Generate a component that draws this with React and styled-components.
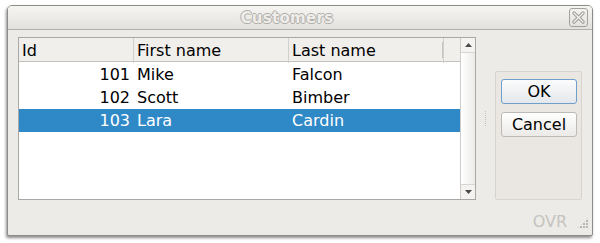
import React from "react";
import styled, { createGlobalStyle } from "styled-components";

const Global = createGlobalStyle`
  html, body {
    margin: 0;
    padding: 0;
    background: #ffffff;
  }
  body {
    font-family: "DejaVu Sans", "Liberation Sans", sans-serif;
  }
`;

const Stage = styled.div`
  width: 600px;
  height: 243px;
  padding: 5px 0 0 7px;
  box-sizing: border-box;
`;

const Window = styled.div`
  width: 586px;
  height: 231px;
  box-sizing: border-box;
  border: 1px solid #8e8c88;
  border-radius: 5px 5px 2px 2px;
  background: #edebe7;
  box-shadow: -1px 2px 3px rgba(0, 0, 0, 0.45);
  display: flex;
  flex-direction: column;
  overflow: hidden;
`;

const TitleBar = styled.div`
  height: 23px;
  flex: none;
  display: flex;
  align-items: center;
  justify-content: center;
  position: relative;
  padding-right: 26px;
  background: linear-gradient(#f6f5f3, #e3e1dd);
  border-bottom: 1px solid #b3b1ac;
`;

const Title = styled.span`
  font-size: 15px;
  font-weight: bold;
  color: #efedea;
  letter-spacing: 0.3px;
  text-shadow: 1px 0 0 #b0aeaa, -1px 0 0 #b0aeaa, 0 1px 0 #b0aeaa, 0 -1px 0 #b0aeaa;
`;

const CloseBtn = styled.div`
  position: absolute;
  right: 4px;
  top: 2px;
  width: 17px;
  height: 17px;
  border: 1px solid #a3a19d;
  border-radius: 3px;
  display: flex;
  align-items: center;
  justify-content: center;
  background: linear-gradient(#f4f3f1, #e4e2de);
`;

const Body = styled.div`
  flex: 1;
  display: flex;
  padding: 7px 10px 0 10px;
`;

const Table = styled.div`
  width: 458px;
  height: 163px;
  box-sizing: border-box;
  border: 1px solid #aaa8a4;
  background: #ffffff;
  display: flex;
`;

const Grid = styled.div`
  flex: 1;
  display: flex;
  flex-direction: column;
`;

const HeaderRow = styled.div`
  display: grid;
  grid-template-columns: 115px 155px 155px 1fr;
  height: 23px;
  flex: none;
  background: #f1efec;
  border-bottom: 1px solid #c4c2be;
  margin-bottom: 1px;
`;

const HeaderCell = styled.div`
  font-size: 16px;
  color: #000;
  line-height: 25px;
  padding-left: 3px;
  border-right: ${(p) => (p.$last ? "none" : "1px solid #d2d0cc")};
  position: relative;
  &::after {
    content: "";
    display: ${(p) => (p.$mark ? "block" : "none")};
    position: absolute;
    right: 0;
    top: 4px;
    width: 1px;
    height: 16px;
    background: #c6c4c0;
  }
`;

const Row = styled.div`
  display: grid;
  grid-template-columns: 115px 155px 155px 1fr;
  height: 23px;
  flex: none;
  background: ${(p) => (p.$selected ? "#2f89c7" : "transparent")};
  color: ${(p) => (p.$selected ? "#ffffff" : "#000000")};
  font-size: 16px;
  line-height: 24px;
`;

const Cell = styled.div`
  padding: 0 ${(p) => (p.$right ? "4px" : "0")} 0 ${(p) => (p.$right ? "0" : "3px")};
  text-align: ${(p) => (p.$right ? "right" : "left")};
  white-space: nowrap;
`;

const ScrollBar = styled.div`
  width: 14px;
  flex: none;
  border-left: 1px solid #cfcdc9;
  background: linear-gradient(90deg, #ffffff, #ecebe8);
  display: flex;
  flex-direction: column;
  justify-content: space-between;
`;

const Arrow = styled.div`
  height: 14px;
  display: flex;
  align-items: center;
  justify-content: center;
  border-bottom: ${(p) => (p.$down ? "none" : "1px solid #d8d6d2")};
  border-top: ${(p) => (p.$down ? "1px solid #d8d6d2" : "none")};
  background: #f4f3f1;
`;

const Splitter = styled.div`
  width: 19px;
  flex: none;
  display: flex;
  align-items: center;
  justify-content: center;
`;

const Dots = styled.div`
  width: 1px;
  height: 16px;
  background: repeating-linear-gradient(#c2c0bb 0 1px, transparent 1px 2px);
`;

const Panel = styled.div`
  width: 87px;
  height: 129px;
  margin-top: 34px;
  box-sizing: border-box;
  border: 1px solid #d7d4cf;
  border-radius: 2px;
  background: #eae7e3;
  padding: 7px 5px;
  display: flex;
  flex-direction: column;
  gap: 8px;
`;

const Button = styled.button`
  width: 76px;
  height: 25px;
  box-sizing: border-box;
  font-family: "DejaVu Sans", "Liberation Sans", sans-serif;
  font-size: 16px;
  color: #000;
  border-radius: 3px;
  border: 1px solid ${(p) => (p.$default ? "#6f9fca" : "#bdbab5")};
  background: ${(p) =>
    p.$default
      ? "linear-gradient(#fbfbfb, #e4e8ec)"
      : "linear-gradient(#ffffff, #ebeae7)"};
  padding: 0;
  line-height: 23px;
`;

const Footer = styled.div`
  height: 36px;
  flex: none;
  display: flex;
  align-items: center;
  justify-content: flex-end;
  padding-right: 3px;
  gap: 10px;
`;

const Status = styled.span`
  font-size: 16px;
  color: #c5c3bf;
  margin-top: 6px;
`;

const Grip = styled.div`
  width: 12px;
  height: 12px;
  margin-top: 10px;
  background:
    radial-gradient(circle at 1px 1px, #b9b7b3 0.8px, transparent 1px) 0 0 / 3px 3px;
  clip-path: polygon(100% 0, 100% 100%, 0 100%);
`;

const rows = [
  { id: 101, first: "Mike", last: "Falcon" },
  { id: 102, first: "Scott", last: "Bimber" },
  { id: 103, first: "Lara", last: "Cardin", selected: true },
];

export default function App() {
  return (
    <Stage>
      <Global />
      <Window>
        <TitleBar>
          <Title>Customers</Title>
          <CloseBtn>
            <svg width="13" height="13" viewBox="0 0 13 13">
              <path
                d="M2 2 L11 11 M11 2 L2 11"
                stroke="#9c9a96"
                strokeWidth="3.2"
                strokeLinecap="round"
              />
              <path
                d="M2 2 L11 11 M11 2 L2 11"
                stroke="#f2f1ee"
                strokeWidth="1.4"
                strokeLinecap="round"
              />
            </svg>
          </CloseBtn>
        </TitleBar>
        <Body>
          <Table>
            <Grid>
              <HeaderRow>
                <HeaderCell>Id</HeaderCell>
                <HeaderCell>First name</HeaderCell>
                <HeaderCell $mark>Last name</HeaderCell>
                <HeaderCell $last />
              </HeaderRow>
              {rows.map((r) => (
                <Row key={r.id} $selected={r.selected}>
                  <Cell $right>{r.id}</Cell>
                  <Cell>{r.first}</Cell>
                  <Cell>{r.last}</Cell>
                  <Cell />
                </Row>
              ))}
            </Grid>
            <ScrollBar>
              <Arrow>
                <svg width="7" height="4" viewBox="0 0 7 4">
                  <path d="M0 4 L3.5 0 L7 4 Z" fill="#4a4a48" />
                </svg>
              </Arrow>
              <Arrow $down>
                <svg width="7" height="4" viewBox="0 0 7 4">
                  <path d="M0 0 L3.5 4 L7 0 Z" fill="#4a4a48" />
                </svg>
              </Arrow>
            </ScrollBar>
          </Table>
          <Splitter>
            <Dots />
          </Splitter>
          <Panel>
            <Button $default>OK</Button>
            <Button>Cancel</Button>
          </Panel>
        </Body>
        <Footer>
          <Status>OVR</Status>
          <Grip />
        </Footer>
      </Window>
    </Stage>
  );
}
